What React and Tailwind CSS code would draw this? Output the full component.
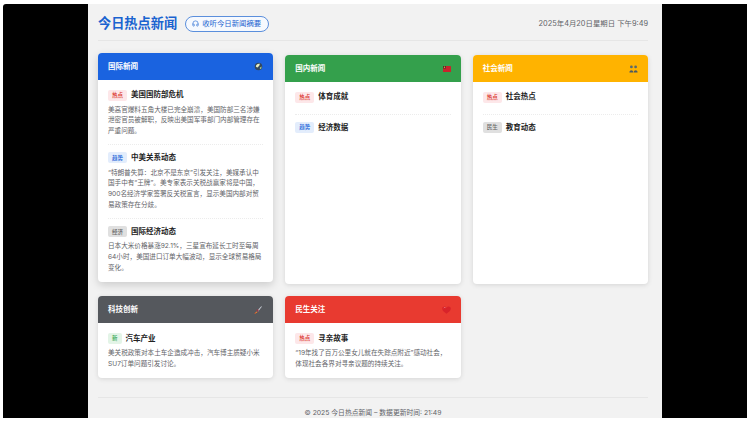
import React from 'react'
import { Headphones } from 'lucide-react'

const FONT = "font-['Inter','Noto_Sans_CJK_SC',sans-serif]"

const TAGS = {
	hot: 'bg-[#fde7e9] text-[#d93025]',
	trend: 'bg-[#e3edfc] text-[#1a63d8]',
	plain: 'bg-[#e0e0e0] text-[#666666]',
	fresh: 'bg-[#e3f4e7] text-[#34a853]',
}

const Globe = () => (
	<svg width="9" height="9" viewBox="0 0 10 10">
		<circle cx="5" cy="5" r="4.2" fill="#33475f" />
		<path d="M2 4.5 C3 2 5 1.5 6.5 2 L6 4 L4 6 L2.5 5.5 Z" fill="#e9efc4" />
		<path d="M6.5 6 L8.5 5 L8 7.5 L6.5 8 Z" fill="#9fc48a" />
	</svg>
)

const Flag = () => (
	<svg width="8" height="6" viewBox="0 0 8 6">
		<rect width="8" height="6" rx="0.6" fill="#c8242c" />
		<rect x="0" y="0" width="3" height="2.5" fill="#5b2a2c" />
		<circle cx="1.5" cy="1.3" r="0.7" fill="#d9b23c" />
	</svg>
)

const People = () => (
	<svg width="9" height="8" viewBox="0 0 9 8">
		<circle cx="2.4" cy="1.9" r="1.4" fill="#5a6a6c" />
		<circle cx="6.6" cy="1.9" r="1.4" fill="#5a6a6c" />
		<path d="M0.4 7.4 C0.4 4.4 4.2 4.4 4.3 7.4 Z" fill="#4c5a60" />
		<path d="M4.7 7.4 C4.8 4.4 8.6 4.4 8.6 7.4 Z" fill="#4c5a60" />
	</svg>
)

const Rocket = () => (
	<svg width="10" height="10" viewBox="0 0 10 10">
		<path d="M4 6 L8 1.5 C8.6 1 9 1.4 8.6 2 L4.8 7 Z" fill="#c9ced6" />
		<path d="M3.2 5 L5 4 L5.8 5.6 L4.6 7.4 Z" fill="#8c3d4a" />
		<path d="M3.6 6.4 L4.4 7.2 L1.4 9 Z" fill="#f2a12c" />
		<path d="M2.6 7 L3.4 7.8 L1.4 9 Z" fill="#e2462c" />
	</svg>
)

const Heart = () => (
	<svg width="9" height="8" viewBox="0 0 10 9">
		<path d="M5 8.6 C1 6 0.2 4.4 0.2 2.8 C0.2 0.6 3.6 -0.2 5 2 C6.4 -0.2 9.8 0.6 9.8 2.8 C9.8 4.4 9 6 5 8.6 Z" fill="#d8232a" />
		<path d="M2 2.4 C2.4 1.6 3.2 1.4 3.8 1.8" stroke="#f7a7a4" strokeWidth="0.7" fill="none" />
	</svg>
)

const SECTIONS = [
	{
		title: '国际新闻',
		color: 'bg-[#1a63e0]',
		icon: <Globe />,
		lift: '-translate-y-0.5 shadow-[0_3px_8px_rgba(0,0,0,0.16)]',
		items: [
			{
				tag: '热点',
				kind: 'hot',
				title: '美国国防部危机',
				text: '美高官爆料五角大楼已完全崩溃，美国防部三名涉嫌泄密官员被解职，反映出美国军事部门内部管理存在严重问题。',
			},
			{
				tag: '趋势',
				kind: 'trend',
				title: '中美关系动态',
				text: '“特朗普失算：北京不是东京”引发关注，美媒承认中国手中有“王牌”。美专家表示关税战赢家将是中国，900名经济学家签署反关税宣言，显示美国内部对贸易政策存在分歧。',
			},
			{
				tag: '经济',
				kind: 'plain',
				title: '国际经济动态',
				text: '日本大米价格暴涨92.1%，三星宣布延长工时至每周64小时，美国进口订单大幅波动，显示全球贸易格局变化。',
			},
		],
	},
	{
		title: '国内新闻',
		color: 'bg-[#34a04c]',
		icon: <Flag />,
		items: [
			{ tag: '热点', kind: 'hot', title: '体育成就' },
			{ tag: '趋势', kind: 'trend', title: '经济数据' },
		],
	},
	{
		title: '社会新闻',
		color: 'bg-[#ffb300]',
		icon: <People />,
		items: [
			{ tag: '热点', kind: 'hot', title: '社会热点' },
			{ tag: '民生', kind: 'plain', title: '教育动态' },
		],
	},
	{
		title: '科技创新',
		color: 'bg-[#55585d]',
		icon: <Rocket />,
		items: [
			{
				tag: '新',
				kind: 'fresh',
				title: '汽车产业',
				text: '美关税政策对本土车企造成冲击，汽车博主质疑小米SU7订单问题引发讨论。',
			},
		],
	},
	{
		title: '民生关注',
		color: 'bg-[#e83a30]',
		icon: <Heart />,
		items: [
			{
				tag: '热点',
				kind: 'hot',
				title: '寻亲故事',
				text: '“19年找了百万公里女儿就在失踪点附近”感动社会，体现社会各界对寻亲议题的持续关注。',
			},
		],
	},
]

const NewsItem = ({ item }) => (
	<div className="pb-[7px] mb-2 border-b border-dotted border-[#ececec] last:border-b-0 last:mb-0">
		<div className="flex items-center gap-1 h-2.5 mb-[4.6px]">
			<span className={`flex items-center justify-center h-[11px] px-1 rounded-[2px] text-[5.5px] font-medium ${TAGS[item.kind]}`}>
				{item.tag}
			</span>
			<span className="text-[7.5px] font-semibold text-[#222222]">{item.title}</span>
		</div>
		{item.text && <p className="text-[6.6px] leading-[10.8px] text-[#5f6368]">{item.text}</p>}
	</div>
)

const NewsCard = ({ section }) => (
	<div className={`bg-white rounded-[4px] overflow-hidden ${section.lift || 'shadow-[0_1px_5px_rgba(0,0,0,0.12)]'}`}>
		<div className={`flex items-center justify-between h-[27px] px-2.5 text-white ${section.color}`}>
			<span className="text-[7.5px] font-semibold">{section.title}</span>
			{section.icon}
		</div>
		<div className="px-2.5 pt-2.5 pb-[1.5px]">
			{section.items.map((item) => (
				<NewsItem key={item.title} item={item} />
			))}
		</div>
	</div>
)

export default function App() {
	return (
		<div className={`h-[421px] w-[750px] overflow-hidden bg-white pt-1 px-[3px] pb-[3px] ${FONT}`}>
			<div className="h-full bg-black rounded-tl-[3px] flex justify-center">
				<div className="w-[574px] h-full bg-[#f2f2f2] pl-2.5 pr-3.5">
					<header className="flex items-center justify-between h-[36.5px] pt-1 border-b border-[#e6e6e6]">
						<div className="flex items-center gap-2">
							<h1 className="text-[13.2px] font-bold text-[#1a63d0]">今日热点新闻</h1>
							<button className="flex items-center gap-[3px] h-4 pl-1.5 pr-[7px] rounded-full border border-[#5b8fdc] bg-[#f6f9fe] text-[7.4px] leading-none text-[#1a63d0]">
								<Headphones size={7} strokeWidth={2} />
								收听今日新闻摘要
							</button>
						</div>
						<div className="text-[7.4px] text-[#5f6368]">2025年4月20日星期日 下午9:49</div>
					</header>
					<main className="grid grid-cols-3 gap-3 mt-[14.5px]">
						{SECTIONS.map((section) => (
							<NewsCard key={section.title} section={section} />
						))}
					</main>
					<footer className="mt-[19px] pt-2.5 border-t border-[#e6e6e6] text-center text-[6.8px] text-[#5f6368]">
						© 2025 今日热点新闻 – 数据更新时间: 21:49
					</footer>
				</div>
			</div>
		</div>
	)
}
